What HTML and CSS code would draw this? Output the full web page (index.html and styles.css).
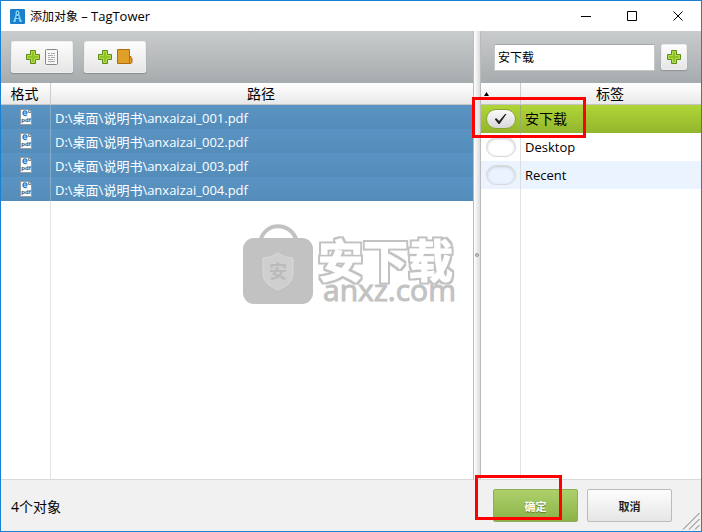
FILE: index.html
```
<!DOCTYPE html>
<html lang="zh-CN">
<head>
  <meta charset="UTF-8" />
  <meta name="viewport" content="width=device-width, initial-scale=1.0"/>
  <title>添加对象 – TagTower</title>
  <link rel="stylesheet" href="styles.css">
</head>
<body>

<svg class="defs" width="12" height="16">
  <symbol id="plus" viewBox="0 0 14 14">
    <path d="M4.500 .5h5v4h4v5h-4v4h-5v-4h-4v-5h4z" fill="#8fc31f" stroke="#5f8a1c"/>
    <path d="M5.500 5.500v-4h3v4h4v3h-4v4h-3v-4h-4v-3z" fill="none" stroke="#b5dc50"/>
  </symbol>
  <symbol id="page" viewBox="0 0 12 16">
    <path d="M.5 .5h8l3 3v12h-11z" fill="#fbfbfb" stroke="#999"/>
    <path d="M8.500 .5v3h3" fill="#ddd" stroke="#888"/>
    <path d="M3 4.200h4c0-3-4-3-4 0 0 2.500 2.500 2.800 4 1.600" fill="none" stroke="#1b7fd0" stroke-width="1.300"/>
  </symbol>
</svg>

<div class="window">
  <header class="titlebar">
    <svg class="logo" width="15" height="15" viewBox="0 0 15 15">
      <rect width="15" height="15" rx="1" fill="#1d7fc9"/>
      <path d="M7.500 1 9.500 3v3l1 3 1.500 4h-2.500L9 10H6l-.5 3H3l1.500-4 1-3V3z" fill="#7dd6fa"/>
      <path d="M7 3h1v2H7zM6.500 7h2v2h-2z" fill="#145f9f"/>
    </svg>
    <span class="title">添加对象 <span class="name">– TagTower</span></span>
    <div class="controls">
      <button type="button" aria-label="最小化"><svg width="11" height="11"><path d="M0 5.500h10" stroke="#000"/></svg></button>
      <button type="button" aria-label="最大化"><svg width="11" height="11"><path d="M.5 .5h9v9h-9z" fill="none" stroke="#000"/></svg></button>
      <button type="button" aria-label="关闭"><svg width="11" height="11"><path d="M.5 .5l9 9M9.500 .5l-9 9" stroke="#000"/></svg></button>
    </div>
  </header>

  <main class="panes">
    <section class="files">
      <div class="toolbar">
        <button type="button" class="btn tool" aria-label="添加文件">
          <svg width="14" height="14"><use href="#plus"/></svg>
          <svg width="14" height="16" viewBox="0 0 14 16">
            <rect x=".5" y=".5" width="12" height="15" rx="1" fill="#f7f7f7" stroke="#888880"/>
            <path d="M3 4.500h2m1 0h4M3 6.500h5m1 0h1M3 8.500h2m1 0h4M3 10.500h5m1 0h1M3 12.500h7" stroke="#aaa"/>
          </svg>
        </button>
        <button type="button" class="btn tool" aria-label="添加文件夹">
          <svg width="14" height="14"><use href="#plus"/></svg>
          <svg width="16" height="16" viewBox="0 0 16 16">
            <path d="M12.500 7.500h1.500v2h1v4l-1 1h-1.500z" fill="#dfa027" stroke="#b36b15"/>
            <path d="M.5 .5h12v14H.5z" fill="#dfa027" stroke="#b36b15"/>
          </svg>
        </button>
      </div>
      <table class="file-table">
        <thead>
          <tr><th class="format">格式</th><th>路径</th></tr>
        </thead>
        <tbody>
          <tr><td><svg width="12" height="16"><use href="#page"/><text x="6" y="13" class="ext">pdf</text></svg></td><td>D:\桌面\说明书\anxaizai_001.pdf</td></tr>
          <tr><td><svg width="12" height="16"><use href="#page"/><text x="6" y="13" class="ext">pdf</text></svg></td><td>D:\桌面\说明书\anxaizai_002.pdf</td></tr>
          <tr><td><svg width="12" height="16"><use href="#page"/><text x="6" y="13" class="ext">pdf</text></svg></td><td>D:\桌面\说明书\anxaizai_003.pdf</td></tr>
          <tr><td><svg width="12" height="16"><use href="#page"/><text x="6" y="13" class="ext">pdf</text></svg></td><td>D:\桌面\说明书\anxaizai_004.pdf</td></tr>
        </tbody>
      </table>
      <div class="rest"></div>
      <svg class="watermark" width="220" height="90" viewBox="0 0 220 90">
        <filter id="outline" x="-5%" y="-10%" width="110%" height="120%">
          <feMorphology in="SourceAlpha" operator="dilate" radius="2" result="grown"/>
          <feFlood flood-color="#c2c2c2"/>
          <feComposite in2="grown" operator="in"/>
          <feMerge><feMergeNode/><feMergeNode in="SourceGraphic"/></feMerge>
        </filter>
        <path d="M18 18C22-3 50-3 55 18" fill="none" stroke="#c2c2c2" stroke-width="4"/>
        <rect x="1" y="14" width="70" height="66" rx="11" fill="#c2c2c2"/>
        <path d="M36 29q7 5 15 5v16q0 10-15 16-15-6-15-16V34q8 0 15-5z" fill="#cfcfcf" stroke="#d8d8d8"/>
        <text x="36" y="54" text-anchor="middle" class="mark-shield">安</text>
        <text x="76" y="54" class="mark-name" filter="url(#outline)">安下载</text>
        <text x="81" y="77" class="mark-url">anxz.com</text>
      </svg>
    </section>

    <div class="splitter"><span></span></div>

    <section class="tags">
      <div class="toolbar">
        <input type="text" value="安下载" aria-label="标签名称">
        <button type="button" class="btn add" aria-label="添加标签"><svg width="14" height="14"><use href="#plus"/></svg></button>
      </div>
      <table class="tag-table">
        <thead>
          <tr><th class="check"><svg width="5" height="4"><path d="M0 4h5L2.500 0z"/></svg></th><th>标签</th></tr>
        </thead>
        <tbody>
          <tr class="selected"><td><input type="checkbox" id="tag1" checked></td><td><label for="tag1">安下载</label></td></tr>
          <tr><td><input type="checkbox" id="tag2"></td><td><label for="tag2">Desktop</label></td></tr>
          <tr class="alt"><td><input type="checkbox" id="tag3"></td><td><label for="tag3">Recent</label></td></tr>
        </tbody>
      </table>
      <div class="rest"></div>
      <div class="callout callout-tag"></div>
    </section>
  </main>

  <footer class="footer">
    <span class="count">4个对象</span>
    <div class="ok-wrap">
      <button type="button" class="btn ok">确定</button>
      <div class="callout callout-ok"></div>
    </div>
    <button type="button" class="btn cancel">取消</button>
    <svg class="grip" width="18" height="18"><path d="M1 17.500 17.500 1M7 17.500 17.500 7M13 17.500l4.500-4.500" stroke="#777"/></svg>
  </footer>
</div>

</body>
</html>
```

FILE: styles.css
```
* { box-sizing: border-box; }

body {
  margin: 0;
  font-family: "Open Sans", "Noto Sans CJK SC", sans-serif;
  font-size: 13px;
  color: #000;
}

svg { display: block; }

.defs { position: absolute; }

button { padding: 0; font-family: inherit; }

.window {
  display: flex;
  flex-direction: column;
  min-height: 100vh;
  border: 1px solid #1a80d2;
  background: #fff;
}

.titlebar {
  display: flex;
  align-items: center;
  height: 30px;
  padding-left: 9px;
  font-size: 12px;
}

.title { margin-left: 5px; }

.name { font-size: 13px; }

.controls {
  display: flex;
  margin-left: auto;
}

.controls button {
  display: flex;
  align-items: center;
  justify-content: center;
  width: 46px;
  height: 28px;
  border: 0;
  background: none;
}

.panes {
  flex: 1;
  display: flex;
}

.files, .tags {
  position: relative;
  display: flex;
  flex-direction: column;
}

.files { flex: 1; }

.tags { width: 220px; }

.toolbar {
  display: flex;
  align-items: center;
  gap: 11px;
  height: 52px;
  padding: 0 10px;
  background: linear-gradient(#c9cccd, #a6abad);
}

.tags .toolbar {
  gap: 6px;
  padding: 0 14px 0 13px;
}

.btn {
  display: flex;
  align-items: center;
  justify-content: center;
  border: 1px solid #d0d0d0;
  border-radius: 2px;
  background: linear-gradient(#fdfdfd, #e6e6e6);
}

.tool, .add {
  border-color: #ededed;
  box-shadow: 0 1px 1px #8c9092;
}

.tool {
  gap: 5px;
  width: 62px;
  height: 32px;
}

.add {
  width: 26px;
  height: 26px;
}

.toolbar input {
  flex: 1;
  min-width: 0;
  height: 27px;
  padding: 0 3px;
  border: 1px solid #c4c7c8;
  border-top-color: #a5a8a9;
  font: inherit;
  font-size: 12px;
}

table {
  width: 100%;
  table-layout: fixed;
  border-collapse: separate;
  border-spacing: 0;
}

th {
  height: 22px;
  padding: 0 2px 0 0;
  border-bottom: 1px solid #c4c4c4;
  background: linear-gradient(#fff, #e9e9e9);
  font-size: 14px;
  font-weight: normal;
  line-height: 20px;
}

th:first-child { border-right: 1px solid #ccc; }

td { padding: 0 4px; }

td:first-child { padding: 0; }

.format { width: 50px; }

.check { width: 40px; }

.check svg { margin-left: 3px; }

.file-table td {
  height: 24px;
  padding-top: 2px;
  background: linear-gradient(#5a94c4, #548cb9);
  color: #fff;
  line-height: 22px;
}

.file-table td:first-child {
  padding: 0;
  border-right: 1px solid #86aac8;
}

.file-table td svg { margin: 0 auto; }

.ext {
  fill: #444;
  font-family: "Liberation Sans", sans-serif;
  font-size: 6px;
  font-weight: bold;
  text-anchor: middle;
}

.tag-table td {
  height: 28px;
  line-height: 26px;
}

.tag-table td:first-child { border-right: 1px solid #dcdfe2; }

.tag-table .alt td { background: #eaf3fe; }

.tag-table .selected td {
  background: linear-gradient(#afd637, #93b52d);
  font-size: 14px;
}

.tag-table .selected td:first-child { border-right-color: #9cae63; }

.tag-table input {
  appearance: none;
  display: block;
  width: 30px;
  height: 20px;
  margin: 0 auto;
  border: 1px solid #d5d9dc;
  border-radius: 10px;
  box-shadow: inset 0 1px 3px #c4cbd2;
}

.tag-table input:checked {
  border-color: #8ba336;
  background: linear-gradient(#fafafa, #d8d8d8);
  box-shadow: none;
}

.tag-table input:checked::after {
  content: "";
  display: block;
  width: 12px;
  height: 10px;
  margin: 4px auto;
  background: #222;
  clip-path: polygon(0 50%, 16% 42%, 38% 70%, 88% 0, 100% 0, 42% 100%, 34% 100%);
}

.rest {
  flex: 1;
  width: 50px;
  border-right: 1px solid #dfe3e8;
}

.tags .rest { width: 40px; }

.splitter {
  display: flex;
  align-items: center;
  justify-content: center;
  width: 8px;
  border: 1px solid #bbb;
  border-width: 0 1px;
  background: linear-gradient(90deg, #fff, #dcdcdc);
}

.splitter span {
  width: 4px;
  height: 4px;
  border: 1px solid #999;
  border-radius: 2px;
  background: #ccc;
}

.watermark {
  position: absolute;
  left: 241px;
  top: 193px;
}

.mark-shield {
  fill: #bbb;
  font-size: 18px;
  font-weight: bold;
}

.mark-name {
  fill: #fff;
  stroke: #fff;
  stroke-width: 1px;
  stroke-linejoin: round;
  font-size: 45px;
  font-weight: bold;
}

.mark-url {
  fill: #c2c2c2;
  stroke: #c2c2c2;
  font-size: 30px;
}

.callout {
  position: absolute;
  border: 3px solid #f00;
  pointer-events: none;
}

.callout-tag {
  left: -9px;
  top: 66px;
  width: 114px;
  height: 41px;
}

.ok-wrap { position: relative; }

.callout-ok {
  left: -18px;
  top: -14px;
  width: 87px;
  height: 45px;
}

.footer {
  position: relative;
  display: flex;
  align-items: center;
  gap: 9px;
  height: 52px;
  padding: 0 29px 0 10px;
  border-top: 1px solid #d9d9d9;
  background: #f1f1f1;
}

.count {
  margin-right: auto;
  font-size: 14px;
}

.ok, .cancel {
  width: 85px;
  height: 33px;
  border-color: #bcbcbc;
  font-size: 11px;
  font-weight: bold;
  color: #222;
}

.ok {
  border-color: #8fac58;
  background: linear-gradient(#aed06c, #8bb347);
  color: #fff;
  text-shadow: 0 1px 1px #5f7d2c;
}

.grip {
  position: absolute;
  right: 1px;
  bottom: 1px;
}
```
